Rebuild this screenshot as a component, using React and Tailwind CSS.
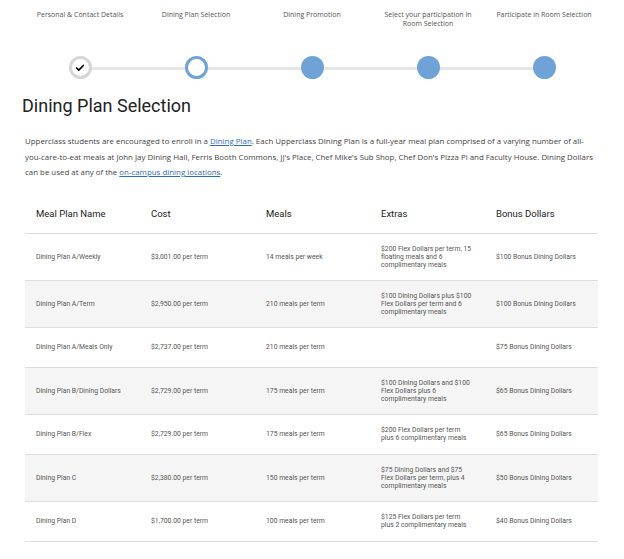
import { Check } from "lucide-react";

const steps = [
  "Personal & Contact Details",
  "Dining Plan Selection",
  "Dining Promotion",
  "Select your participation in Room Selection",
  "Participate in Room Selection",
];

const plans = [
  ["Dining Plan A/Weekly", "$3,001.00 per term", "14 meals per week", "$200 Flex Dollars per term, 15 floating meals and 6 complimentary meals", "$100 Bonus Dining Dollars"],
  ["Dining Plan A/Term", "$2,950.00 per term", "210 meals per term", "$100 Dining Dollars plus $100 Flex Dollars per term and 6 complimentary meals", "$100 Bonus Dining Dollars"],
  ["Dining Plan A/Meals Only", "$2,737.00 per term", "210 meals per term", "", "$75 Bonus Dining Dollars"],
  ["Dining Plan B/Dining Dollars", "$2,729.00 per term", "175 meals per term", "$100 Dining Dollars and $100 Flex Dollars plus 6 complimentary meals", "$65 Bonus Dining Dollars"],
  ["Dining Plan B/Flex", "$2,729.00 per term", "175 meals per term", "$200 Flex Dollars per term plus 6 complimentary meals", "$65 Bonus Dining Dollars"],
  ["Dining Plan C", "$2,380.00 per term", "150 meals per term", "$75 Dining Dollars and $75 Flex Dollars per term, plus 4 complimentary meals", "$50 Bonus Dining Dollars"],
  ["Dining Plan D", "$1,700.00 per term", "100 meals per term", "$125 Flex Dollars per term plus 2 complimentary meals", "$40 Bonus Dining Dollars"],
];

const Dot = ({ i }) => {
  if (i === 0)
    return (
      <div className="w-[23px] h-[23px] rounded-full border-[3px] border-[#d6d6d6] bg-white flex items-center justify-center">
        <Check className="w-[10px] h-[10px] text-black" strokeWidth={4} />
      </div>
    );
  if (i === 1)
    return <div className="w-[23px] h-[23px] rounded-full border-[3px] border-[#6fa3d8] bg-white" />;
  return <div className="w-[23px] h-[23px] rounded-full bg-[#6fa3d8]" />;
};

export default function App() {
  return (
    <div className="w-[624px] h-[559px] bg-white overflow-hidden text-[#333]" style={{ fontFamily: "'Open Sans', sans-serif" }}>
      {/* stepper */}
      <div className="relative pt-[10px]">
        <div className="absolute left-[80px] right-[81px] top-[67px] h-[3px] bg-[#e6e6e6]" />
        <div className="grid grid-cols-5 px-[22px]">
          {steps.map((s, i) => (
            <div key={s} className="flex flex-col items-center">
              <div className="h-[46px] text-[7px] leading-[9px] text-[#555] text-center px-[14px] whitespace-normal">
                {i === 4 ? <span className="whitespace-nowrap">{s}</span> : s}
              </div>
              <div className="relative"><Dot i={i} /></div>
            </div>
          ))}
        </div>
      </div>

      <h1 className="mt-[16px] ml-[22px] text-[18px] leading-[22px] text-[#222]" style={{ fontFamily: "Roboto, sans-serif" }}>
        Dining Plan Selection
      </h1>

      <p className="mt-[17px] mx-[25px] text-[7.9px] leading-[15.5px] text-[#444]">
        Upperclass students are encouraged to enroll in a <a className="text-[#2a6ebb] underline">Dining Plan</a>. Each Upperclass Dining Plan is a full-year meal plan comprised of a varying number of all-you-care-to-eat meals at John Jay Dining Hall, Ferris Booth Commons, JJ's Place, Chef Mike's Sub Shop, Chef Don's Pizza Pi and Faculty House. Dining Dollars can be used at any of the <a className="text-[#2a6ebb] underline">on-campus dining locations</a>.
      </p>

      <div className="mx-[25px] mt-[15px] w-[573px]">
        <div className="grid grid-cols-[115px_115px_115px_115px_1fr] h-[38px] items-center border-b border-[#ddd] pl-[11px] text-[9.5px] text-[#222]" style={{ fontFamily: "Roboto, sans-serif" }}>
          <div>Meal Plan Name</div>
          <div>Cost</div>
          <div>Meals</div>
          <div>Extras</div>
          <div>Bonus Dollars</div>
        </div>
        {plans.map((p, i) => (
          <div
            key={p[0]}
            className={`grid grid-cols-[115px_115px_115px_115px_1fr] items-center min-h-[40px] py-[11px] pl-[11px] border-b border-[#ddd] text-[6.8px] leading-[8px] text-[#555] ${i % 2 === 1 ? "bg-[#f5f5f5]" : "bg-white"}`}
            style={{ fontFamily: "Roboto, sans-serif" }}
          >
            <div>{p[0]}</div>
            <div>{p[1]}</div>
            <div>{p[2]}</div>
            <div className="max-w-[92px]">{p[3]}</div>
            <div>{p[4]}</div>
          </div>
        ))}
      </div>
    </div>
  );
}
